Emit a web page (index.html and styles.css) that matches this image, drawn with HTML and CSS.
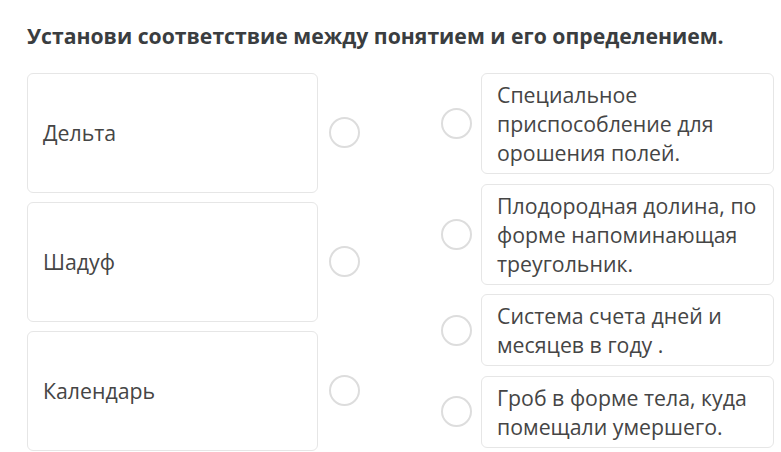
FILE: index.html
```html
<!DOCTYPE html>
<html lang="ru">
<head>
<meta charset="utf-8">
<title>Соответствие</title>
<link rel="stylesheet" href="styles.css">
</head>
<body>
<div class="page">
  <h1 class="title">Установи соответствие между понятием и его определением.</h1>
  <div class="match">
    <div class="col col-left">
      <div class="row">
        <div class="card card-term">Дельта</div>
        <span class="radio"></span>
      </div>
      <div class="row">
        <div class="card card-term">Шадуф</div>
        <span class="radio"></span>
      </div>
      <div class="row">
        <div class="card card-term">Календарь</div>
        <span class="radio"></span>
      </div>
    </div>
    <div class="col col-right">
      <div class="row">
        <span class="radio"></span>
        <div class="card card-def">Специальное приспособление для орошения полей.</div>
      </div>
      <div class="row">
        <span class="radio"></span>
        <div class="card card-def">Плодородная долина, по форме напоминающая треугольник.</div>
      </div>
      <div class="row">
        <span class="radio"></span>
        <div class="card card-def">Система счета дней и месяцев в году .</div>
      </div>
      <div class="row">
        <span class="radio"></span>
        <div class="card card-def">Гроб в форме тела, куда помещали умершего.</div>
      </div>
    </div>
  </div>
</div>
</body>
</html>
```

FILE: styles.css
```css
html, body {
  margin: 0;
  padding: 0;
  background: #ffffff;
}

body {
  font-family: "Open Sans", "Noto Sans", "DejaVu Sans", sans-serif;
  color: #444444;
}

.page {
  width: 781px;
  height: 452px;
  padding: 0 7px 0 27px;
  box-sizing: border-box;
  overflow: hidden;
}

.title {
  margin: 0;
  padding-top: 22px;
  height: 50px;
  box-sizing: border-box;
  font-size: 21.2px;
  line-height: 28px;
  font-weight: 700;
  color: #3a3d40;
  white-space: nowrap;
}

.match {
  display: flex;
  justify-content: space-between;
  margin-top: 23px;
}

.col {
  display: flex;
  flex-direction: column;
  width: 333px;
}

.col-left {
  gap: 9.5px;
}

.col-right {
  gap: 9.5px;
}

.row {
  display: flex;
  align-items: center;
}

.card {
  box-sizing: border-box;
  border: 1px solid #e6e6e6;
  border-radius: 6px;
  background: #ffffff;
  font-size: 21.3px;
  line-height: 29px;
  color: #454545;
}

.card-term {
  width: 292px;
  height: 119.5px;
  padding: 0 15px;
  display: flex;
  align-items: center;
}

.card-def {
  width: 293px;
  padding: 6px 15px;
}

.col-left .radio {
  margin-left: 11px;
}

.col-right .radio {
  margin-right: 9px;
}

.radio {
  width: 31px;
  height: 31px;
  box-sizing: border-box;
  border: 2.5px solid #dddddd;
  border-radius: 50%;
  flex: none;
}
```
